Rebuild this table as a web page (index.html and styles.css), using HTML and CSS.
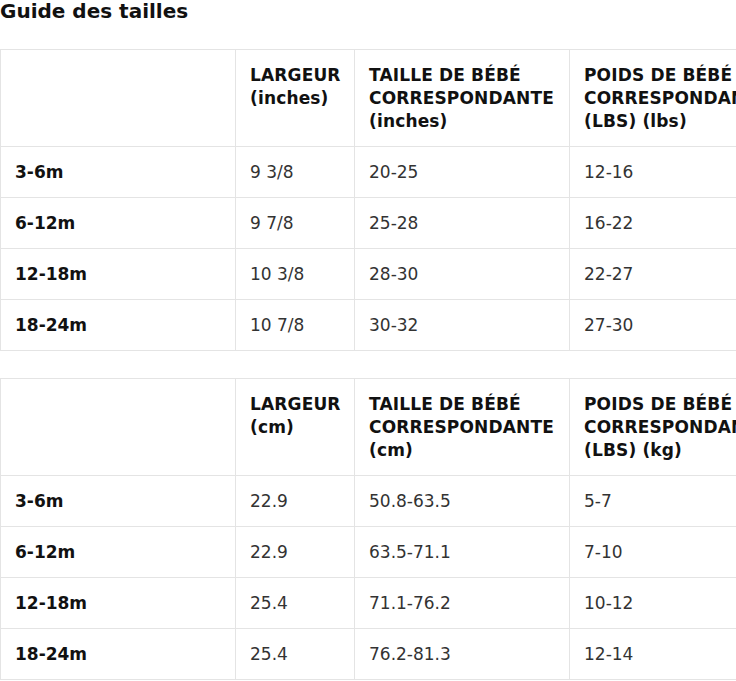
FILE: index.html
```html
<!DOCTYPE html>
<html lang="fr">
<head>
<meta charset="utf-8">
<title>Guide des tailles</title>
<link rel="stylesheet" href="styles.css">
</head>
<body>
<div class="page">
  <h2 class="title">Guide des tailles</h2>
  <table class="size-table">
    <colgroup><col class="c1"><col class="c2"><col class="c3"><col class="c4"></colgroup>
    <thead>
      <tr><th></th><th>LARGEUR (inches)</th><th>TAILLE DE BÉBÉ CORRESPONDANTE (inches)</th><th>POIDS DE BÉBÉ CORRESPONDANTE (LBS) (lbs)</th></tr>
    </thead>
    <tbody>
      <tr><th>3-6m</th><td>9 3/8</td><td>20-25</td><td>12-16</td></tr>
      <tr><th>6-12m</th><td>9 7/8</td><td>25-28</td><td>16-22</td></tr>
      <tr><th>12-18m</th><td>10 3/8</td><td>28-30</td><td>22-27</td></tr>
      <tr><th>18-24m</th><td>10 7/8</td><td>30-32</td><td>27-30</td></tr>
    </tbody>
  </table>
  <table class="size-table">
    <colgroup><col class="c1"><col class="c2"><col class="c3"><col class="c4"></colgroup>
    <thead>
      <tr><th></th><th>LARGEUR (cm)</th><th>TAILLE DE BÉBÉ CORRESPONDANTE (cm)</th><th>POIDS DE BÉBÉ CORRESPONDANTE (LBS) (kg)</th></tr>
    </thead>
    <tbody>
      <tr><th>3-6m</th><td>22.9</td><td>50.8-63.5</td><td>5-7</td></tr>
      <tr><th>6-12m</th><td>22.9</td><td>63.5-71.1</td><td>7-10</td></tr>
      <tr><th>12-18m</th><td>25.4</td><td>71.1-76.2</td><td>10-12</td></tr>
      <tr><th>18-24m</th><td>25.4</td><td>76.2-81.3</td><td>12-14</td></tr>
    </tbody>
  </table>
</div>
</body>
</html>
```
FILE: styles.css
```css
html, body {
  margin: 0;
  padding: 0;
  background: #fff;
}
body {
  font-family: "DejaVu Sans", sans-serif;
  color: #222;
  overflow: hidden;
}
.page {
  width: 736px;
  overflow: hidden;
}
.title {
  margin: 0;
  font-size: 20px;
  font-weight: bold;
  line-height: 22px;
  color: #111;
}
.size-table {
  border-collapse: collapse;
  table-layout: fixed;
  width: 784px;
  margin-top: 27px;
  font-size: 17px;
  line-height: 23px;
}
.size-table + .size-table {
  margin-top: 27px;
}
.c1 { width: 235px; }
.c2 { width: 119px; }
.c3 { width: 215px; }
.c4 { width: 215px; }
.size-table th,
.size-table td {
  border: 1px solid #e4e4e4;
  padding: 14px 14px 13px;
  text-align: left;
  vertical-align: top;
}
.size-table thead th {
  font-weight: bold;
  letter-spacing: 0.15px;
  color: #111;
}
.size-table tbody th {
  font-weight: bold;
  color: #111;
}
.size-table td {
  color: #333;
}
```
